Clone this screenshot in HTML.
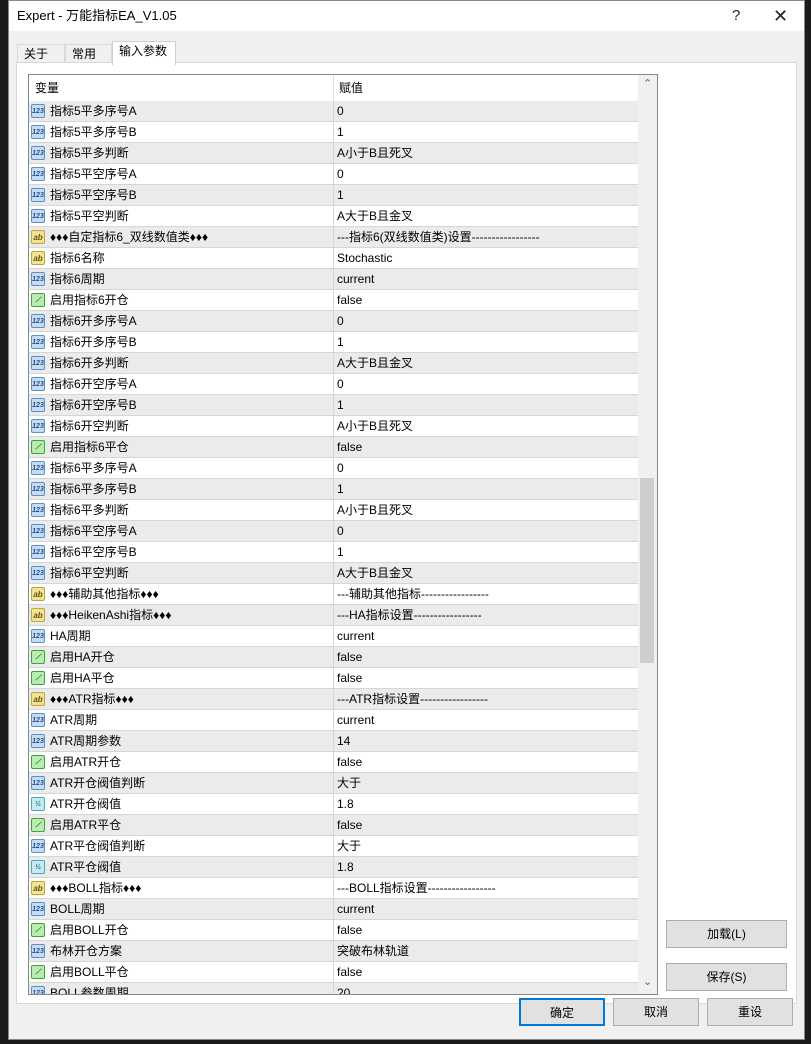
<!DOCTYPE html>
<html><head><meta charset="utf-8"><style>
*{margin:0;padding:0;box-sizing:border-box}
body{width:811px;height:1044px;background:#1b1b1b;position:relative;overflow:hidden;font-family:"Liberation Sans","Noto Sans CJK SC",sans-serif;font-size:12px;color:#000}
.win{position:absolute;left:8px;top:0;width:797px;height:1040px;background:#f0f0f0;border:1px solid #888}
.title{position:absolute;left:0;top:0;width:100%;height:30px;background:#fff;font-size:13px;line-height:30px;padding-left:8px}
.tb{position:absolute;top:0;font-size:15px;line-height:30px;color:#222}
.tab{position:absolute;top:43px;height:20px;border:1px solid #d9d9d9;border-bottom:none;background:#f0f0f0;line-height:19px;padding-left:6px}
.tab.sel{top:40px;height:24px;background:#fff;z-index:2;border-color:#d0d0d0}
.panel{position:absolute;left:16px;top:62px;width:781px;height:942px;background:#fff;border:1px solid #d9d9d9}
.list{position:absolute;left:28px;top:74px;width:630px;height:921px;border:1px solid #828790;background:#fff;overflow:hidden}
.hdr{position:absolute;left:0;top:0;width:609px;height:26px;line-height:26px;background:#fff}
.hdr span{position:absolute}
.rows{position:absolute;left:0;top:26px;width:609px}
.r{height:21px;position:relative;border-bottom:1px solid #d6d6d6;line-height:20px;white-space:nowrap}
.r:nth-child(odd){background:#ebebeb}
.r .n{position:absolute;left:21px}
.r .v{position:absolute;left:304px;border-left:1px solid #d6d6d6;padding-left:3px;height:21px}
.ic{position:absolute;left:2px;top:3px;width:14px;height:14px;border-radius:2px;font-size:7px;line-height:14px;text-align:center;font-weight:bold}
.i1{background:#c6dcf2;border:1px solid #5b8fc9;color:#1f4f8f}
.i2{background:#f2e39a;border:1px solid #c4a636;color:#6a5000;font-size:8px}
.i3{background:#b9ecb0;border:1px solid #3fa33a;color:#166b12}
.i4{background:#c6ecf2;border:1px solid #48a8c0;color:#1f6f8f}
.vl{position:absolute;left:304px;top:0;width:1px;height:26px;background:#e0e0e0}
.sb{position:absolute;left:609px;top:0;width:19px;height:919px;background:#f0f0f0}
.th{position:absolute;left:2px;top:403px;width:14px;height:185px;background:#cdcdcd}
.btn{position:absolute;height:28px;background:#e1e1e1;border:1px solid #adadad;text-align:center;line-height:26px}
</style></head><body>
<div class="win">
<div class="title">Expert - 万能指标EA_V1.05</div>
<div class="tb" style="left:723px">?</div>
<div class="tb" style="left:764px;font-size:18px">✕</div>
<div class="tab" style="left:8px;width:48px">关于</div>
<div class="tab" style="left:56px;width:47px">常用</div>
<div class="tab sel" style="left:103px;width:64px">输入参数</div>
</div>
<div class="panel"></div>
<div class="list">
<div class="hdr"><span style="left:6px">变量</span><span style="left:310px">赋值</span><div class="vl"></div></div>
<div class="rows">
<div class="r"><i class="ic i1">123</i><span class="n">指标5平多序号A</span><span class="v">0</span></div>
<div class="r"><i class="ic i1">123</i><span class="n">指标5平多序号B</span><span class="v">1</span></div>
<div class="r"><i class="ic i1">123</i><span class="n">指标5平多判断</span><span class="v">A小于B且死叉</span></div>
<div class="r"><i class="ic i1">123</i><span class="n">指标5平空序号A</span><span class="v">0</span></div>
<div class="r"><i class="ic i1">123</i><span class="n">指标5平空序号B</span><span class="v">1</span></div>
<div class="r"><i class="ic i1">123</i><span class="n">指标5平空判断</span><span class="v">A大于B且金叉</span></div>
<div class="r"><i class="ic i2">ab</i><span class="n">♦♦♦自定指标6_双线数值类♦♦♦</span><span class="v">---指标6(双线数值类)设置-----------------</span></div>
<div class="r"><i class="ic i2">ab</i><span class="n">指标6名称</span><span class="v">Stochastic</span></div>
<div class="r"><i class="ic i1">123</i><span class="n">指标6周期</span><span class="v">current</span></div>
<div class="r"><i class="ic i3">⟋</i><span class="n">启用指标6开仓</span><span class="v">false</span></div>
<div class="r"><i class="ic i1">123</i><span class="n">指标6开多序号A</span><span class="v">0</span></div>
<div class="r"><i class="ic i1">123</i><span class="n">指标6开多序号B</span><span class="v">1</span></div>
<div class="r"><i class="ic i1">123</i><span class="n">指标6开多判断</span><span class="v">A大于B且金叉</span></div>
<div class="r"><i class="ic i1">123</i><span class="n">指标6开空序号A</span><span class="v">0</span></div>
<div class="r"><i class="ic i1">123</i><span class="n">指标6开空序号B</span><span class="v">1</span></div>
<div class="r"><i class="ic i1">123</i><span class="n">指标6开空判断</span><span class="v">A小于B且死叉</span></div>
<div class="r"><i class="ic i3">⟋</i><span class="n">启用指标6平仓</span><span class="v">false</span></div>
<div class="r"><i class="ic i1">123</i><span class="n">指标6平多序号A</span><span class="v">0</span></div>
<div class="r"><i class="ic i1">123</i><span class="n">指标6平多序号B</span><span class="v">1</span></div>
<div class="r"><i class="ic i1">123</i><span class="n">指标6平多判断</span><span class="v">A小于B且死叉</span></div>
<div class="r"><i class="ic i1">123</i><span class="n">指标6平空序号A</span><span class="v">0</span></div>
<div class="r"><i class="ic i1">123</i><span class="n">指标6平空序号B</span><span class="v">1</span></div>
<div class="r"><i class="ic i1">123</i><span class="n">指标6平空判断</span><span class="v">A大于B且金叉</span></div>
<div class="r"><i class="ic i2">ab</i><span class="n">♦♦♦辅助其他指标♦♦♦</span><span class="v">---辅助其他指标-----------------</span></div>
<div class="r"><i class="ic i2">ab</i><span class="n">♦♦♦HeikenAshi指标♦♦♦</span><span class="v">---HA指标设置-----------------</span></div>
<div class="r"><i class="ic i1">123</i><span class="n">HA周期</span><span class="v">current</span></div>
<div class="r"><i class="ic i3">⟋</i><span class="n">启用HA开仓</span><span class="v">false</span></div>
<div class="r"><i class="ic i3">⟋</i><span class="n">启用HA平仓</span><span class="v">false</span></div>
<div class="r"><i class="ic i2">ab</i><span class="n">♦♦♦ATR指标♦♦♦</span><span class="v">---ATR指标设置-----------------</span></div>
<div class="r"><i class="ic i1">123</i><span class="n">ATR周期</span><span class="v">current</span></div>
<div class="r"><i class="ic i1">123</i><span class="n">ATR周期参数</span><span class="v">14</span></div>
<div class="r"><i class="ic i3">⟋</i><span class="n">启用ATR开仓</span><span class="v">false</span></div>
<div class="r"><i class="ic i1">123</i><span class="n">ATR开仓阀值判断</span><span class="v">大于</span></div>
<div class="r"><i class="ic i4">½</i><span class="n">ATR开仓阀值</span><span class="v">1.8</span></div>
<div class="r"><i class="ic i3">⟋</i><span class="n">启用ATR平仓</span><span class="v">false</span></div>
<div class="r"><i class="ic i1">123</i><span class="n">ATR平仓阀值判断</span><span class="v">大于</span></div>
<div class="r"><i class="ic i4">½</i><span class="n">ATR平仓阀值</span><span class="v">1.8</span></div>
<div class="r"><i class="ic i2">ab</i><span class="n">♦♦♦BOLL指标♦♦♦</span><span class="v">---BOLL指标设置-----------------</span></div>
<div class="r"><i class="ic i1">123</i><span class="n">BOLL周期</span><span class="v">current</span></div>
<div class="r"><i class="ic i3">⟋</i><span class="n">启用BOLL开仓</span><span class="v">false</span></div>
<div class="r"><i class="ic i1">123</i><span class="n">布林开仓方案</span><span class="v">突破布林轨道</span></div>
<div class="r"><i class="ic i3">⟋</i><span class="n">启用BOLL平仓</span><span class="v">false</span></div>
<div class="r"><i class="ic i1">123</i><span class="n">BOLL参数周期</span><span class="v">20</span></div>
</div>
<div class="sb"><div style="position:absolute;top:2px;left:5px;font-size:11px;color:#606060">⌃</div><div class="th"></div><div style="position:absolute;top:900px;left:5px;font-size:11px;color:#606060">⌄</div></div>
</div>
<div class="btn" style="left:666px;top:920px;width:121px">加载(L)</div>
<div class="btn" style="left:666px;top:963px;width:121px">保存(S)</div>
<div class="btn" style="left:519px;top:998px;width:86px;border:2px solid #0078d7">确定</div>
<div class="btn" style="left:613px;top:998px;width:86px">取消</div>
<div class="btn" style="left:707px;top:998px;width:86px">重设</div>
</body></html>
